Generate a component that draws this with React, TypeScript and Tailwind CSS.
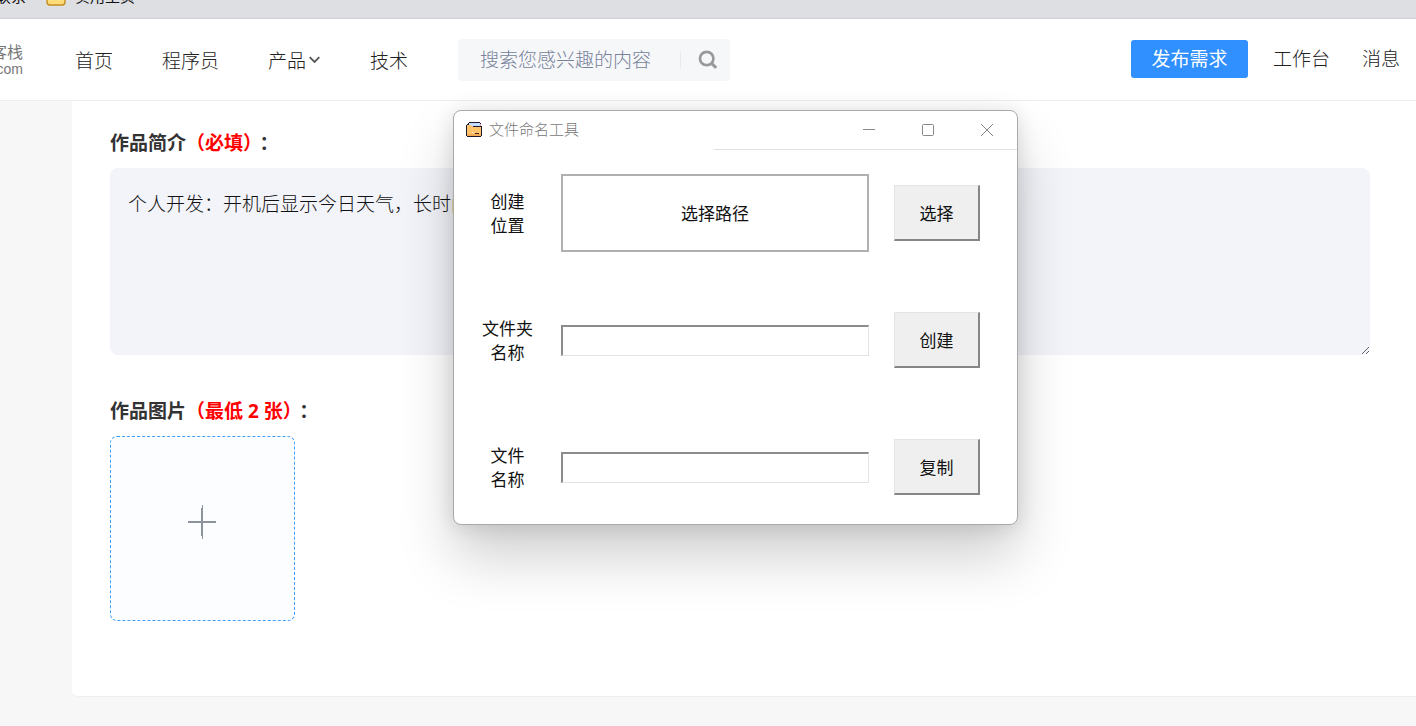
import React, { useState } from 'react';

const navItems = [
  { label: '首页' },
  { label: '程序员' },
  { label: '产品', hasMenu: true },
  { label: '技术' },
];

const toolRows = [
  { id: 'path', lines: ['创建', '位置'], action: '选择', picker: true },
  { id: 'folder', lines: ['文件夹', '名称'], action: '创建' },
  { id: 'file', lines: ['文件', '名称'], action: '复制' },
];

function BookmarksBar() {
  return (
    <div className="h-[19px] overflow-hidden border-b border-[#d0d1d4] bg-[#dedfe3]">
      <div className="-mt-3.5 flex h-5 items-end text-[15px] leading-5 text-[#111]">
        <div className="flex w-[26px] shrink-0 justify-end whitespace-nowrap">联系</div>
        <svg className="ml-5 shrink-0" width="20" height="18" viewBox="0 0 20 18">
          <path d="M1 4a3 3 0 0 1 3-3h4l2 3h6a3 3 0 0 1 3 3v7a3 3 0 0 1-3 3H4a3 3 0 0 1-3-3z" fill="#ffdd79" stroke="#c28e1b" strokeWidth="1.4" />
        </svg>
        <span className="ml-[9px]">实用主页</span>
      </div>
    </div>
  );
}

function Header() {
  return (
    <header className="flex h-[82px] items-center border-b border-[#eee] bg-white pr-4 text-[19px] font-light text-[#222]">
      {/* Logo */}
      <div className="flex w-[23px] shrink-0 flex-col items-end overflow-hidden whitespace-nowrap text-[#777]">
        <span className="text-base leading-[18px] font-normal">客栈</span>
        <span className="text-sm leading-[18px] font-normal" style={{ fontFamily: '"Liberation Sans", sans-serif' }}>.com</span>
      </div>

      <nav className="ml-[52px] flex shrink-0 gap-[49px]">
        {navItems.map((item) => (
          <a key={item.label} href="#" className="flex items-center leading-7">
            {item.label}
            {item.hasMenu && (
              <svg className="ml-[3px]" width="12" height="8" viewBox="0 0 12 8" fill="none" stroke="#555" strokeWidth="1.8">
                <path d="M.7 1.200 5.500 6l4.800-4.800" />
              </svg>
            )}
          </a>
        ))}
      </nav>

      {/* Recherche */}
      <div className="ml-[50px] flex h-[42px] w-[272px] items-center rounded bg-[#f6f7f9]">
        <input
          type="text"
          aria-label="搜索"
          placeholder="搜索您感兴趣的内容"
          className="min-w-0 flex-1 bg-transparent pl-[22px] outline-none placeholder:text-[#77829a]"
        />
        <span className="h-4 w-px bg-[#e8eaee]" />
        <button type="button" aria-label="搜索" className="flex w-[49px] items-center pl-[17px]">
          <svg width="20" height="19" viewBox="0 0 20 19" fill="none" stroke="#999" strokeWidth="2.700">
            <circle cx="8.700" cy="8.500" r="6.700" />
            <path d="m13.500 13.300 4.700 4.500" strokeWidth="3" />
          </svg>
        </button>
      </div>

      <div className="ml-auto flex shrink-0 items-center pb-0.5">
        <button type="button" className="h-[38px] w-[117px] rounded-[3px] bg-[#3190ff] font-normal text-white">
          发布需求
        </button>
        <a href="#" className="ml-[25px]">工作台</a>
        <a href="#" className="ml-8">消息</a>
      </div>
    </header>
  );
}

function WorkForm() {
  const [intro, setIntro] = useState('个人开发：开机后显示今日天气，长时间');

  return (
    <main className="ml-[72px] rounded-bl-md border-b border-[#efefef] bg-white pt-7 pr-[46px] pb-[75px] pl-[38px]">
      <label
        htmlFor="intro"
        className="block text-[19px] leading-7 font-bold text-[#333]"
        style={{ fontFamily: '"Noto Sans", "Noto Sans CJK SC", sans-serif' }}
      >
        作品简介<span className="mr-[7px] text-[#f00]">（必填）</span>：
      </label>
      <textarea
        id="intro"
        value={intro}
        onChange={(e) => setIntro(e.target.value)}
        className="mt-[11px] block h-[187px] w-full rounded-lg bg-[#f3f4f9] px-[18px] py-[21px] text-[19px] leading-7 font-light text-[#111] outline-none"
      />
      <h2
        id="pictures"
        className="mt-[42px] text-[19px] leading-7 font-bold text-[#333]"
        style={{ fontFamily: '"Noto Sans", "Noto Sans CJK SC", sans-serif' }}
      >
        作品图片<span className="mr-[7px] text-[#f00]">（最低 2 张）</span>：
      </h2>
      <button
        type="button"
        aria-labelledby="pictures"
        className="mt-[11px] flex h-[185px] w-[185px] items-center justify-center rounded-[7px] border border-dashed border-[#409eff] bg-[#fbfdff]"
      >
        <svg className="mr-0.5 mb-3.5" width="30" height="36" viewBox="0 0 30 36" shapeRendering="crispEdges" fill="#8c939d">
          <path d="M1 17h28v2H1zM14 4h2v28h-2zM15 1h1v34h-1z" />
        </svg>
      </button>
    </main>
  );
}

function ToolWindow() {
  return (
    <section
      aria-label="文件命名工具"
      className="absolute top-[110px] left-[453px] w-[565px] rounded-lg border border-[#a9a9a9] bg-white shadow-[0_32px_56px_rgba(0,0,0,0.19),0_2px_20px_rgba(0,0,0,0.12)]"
    >
      {/* Barre de titre */}
      <div className="flex h-[38px] items-center pr-6 pl-3">
        <svg width="16" height="16" viewBox="0 0 16 16" shapeRendering="crispEdges">
          <path d="M3 0h11v1h1v3h1v10h-1v1H1v-1H0V3h1V2h1V1h1z" fill="#1c1c30" />
          <path d="M3 1h11v3H3z" fill="#c3dcff" />
          <path d="M1 3h4v1h2v1h8v9H1z" fill="#ffc46b" />
          <path d="M1 12h14v2H1z" fill="#f5ab55" />
          <path d="M9 11h4v1H9z" fill="#3a2a20" />
          <path d="M14 2h1v2h-1z" fill="#ee9bc0" />
          <path d="M6 10h1v1H6z" fill="#fff" />
        </svg>
        <span className="ml-[7px] pb-0.5 text-[15px] leading-5 font-light text-[#777]">文件命名工具</span>
        <div className="ml-auto flex items-center gap-[47px] text-[#888]">
          <button type="button" aria-label="最小化">
            <svg width="12" height="12" viewBox="0 0 12 12" stroke="currentColor"><path d="M0 5.500h12" /></svg>
          </button>
          <button type="button" aria-label="最大化">
            <svg width="12" height="12" viewBox="0 0 12 12" fill="none" stroke="currentColor"><rect x=".5" y=".5" width="11" height="11" rx="1" /></svg>
          </button>
          <button type="button" aria-label="关闭">
            <svg width="12" height="12" viewBox="0 0 12 12" stroke="currentColor"><path d="m0 0 12 12M12 0 0 12" /></svg>
          </button>
        </div>
      </div>
      <div className="ml-[260px] h-px bg-[#e0e0e0]" />

      <div className="flex flex-col gap-[49px] pt-6 pr-[37px] pb-[18px] text-[17px] text-[#111]">
        {toolRows.map((row) => (
          <div key={row.id} className="flex h-[78px] items-center">
            <label htmlFor={row.id} className="w-[107px] text-center leading-6">
              {row.lines[0]}
              <br />
              {row.lines[1]}
            </label>
            {row.picker ? (
              <button id={row.id} type="button" className="h-full flex-1 border-2 border-[#b0b0b0] bg-white">
                选择路径
              </button>
            ) : (
              <input
                id={row.id}
                type="text"
                className="h-[31px] min-w-0 flex-1 border-t-2 border-r border-b border-l-2 border-t-[#8c8c8c] border-r-[#e3e3e3] border-b-[#e3e3e3] border-l-[#8c8c8c] bg-white px-1 outline-none"
              />
            )}
            <button
              type="button"
              className="ml-[25px] h-14 w-[86px] border-t border-r-2 border-b-2 border-l border-t-[#e3e3e3] border-r-[#868686] border-b-[#868686] border-l-[#e3e3e3] bg-[#efefef]"
            >
              {row.action}
            </button>
          </div>
        ))}
      </div>
    </section>
  );
}

export default function App() {
  return (
    <div
      className="relative min-h-screen overflow-hidden bg-[#f7f7f7]"
      style={{ fontFamily: '"Noto Sans CJK SC", sans-serif' }}
    >
      <BookmarksBar />
      <Header />
      <WorkForm />
      <ToolWindow />
    </div>
  );
}
